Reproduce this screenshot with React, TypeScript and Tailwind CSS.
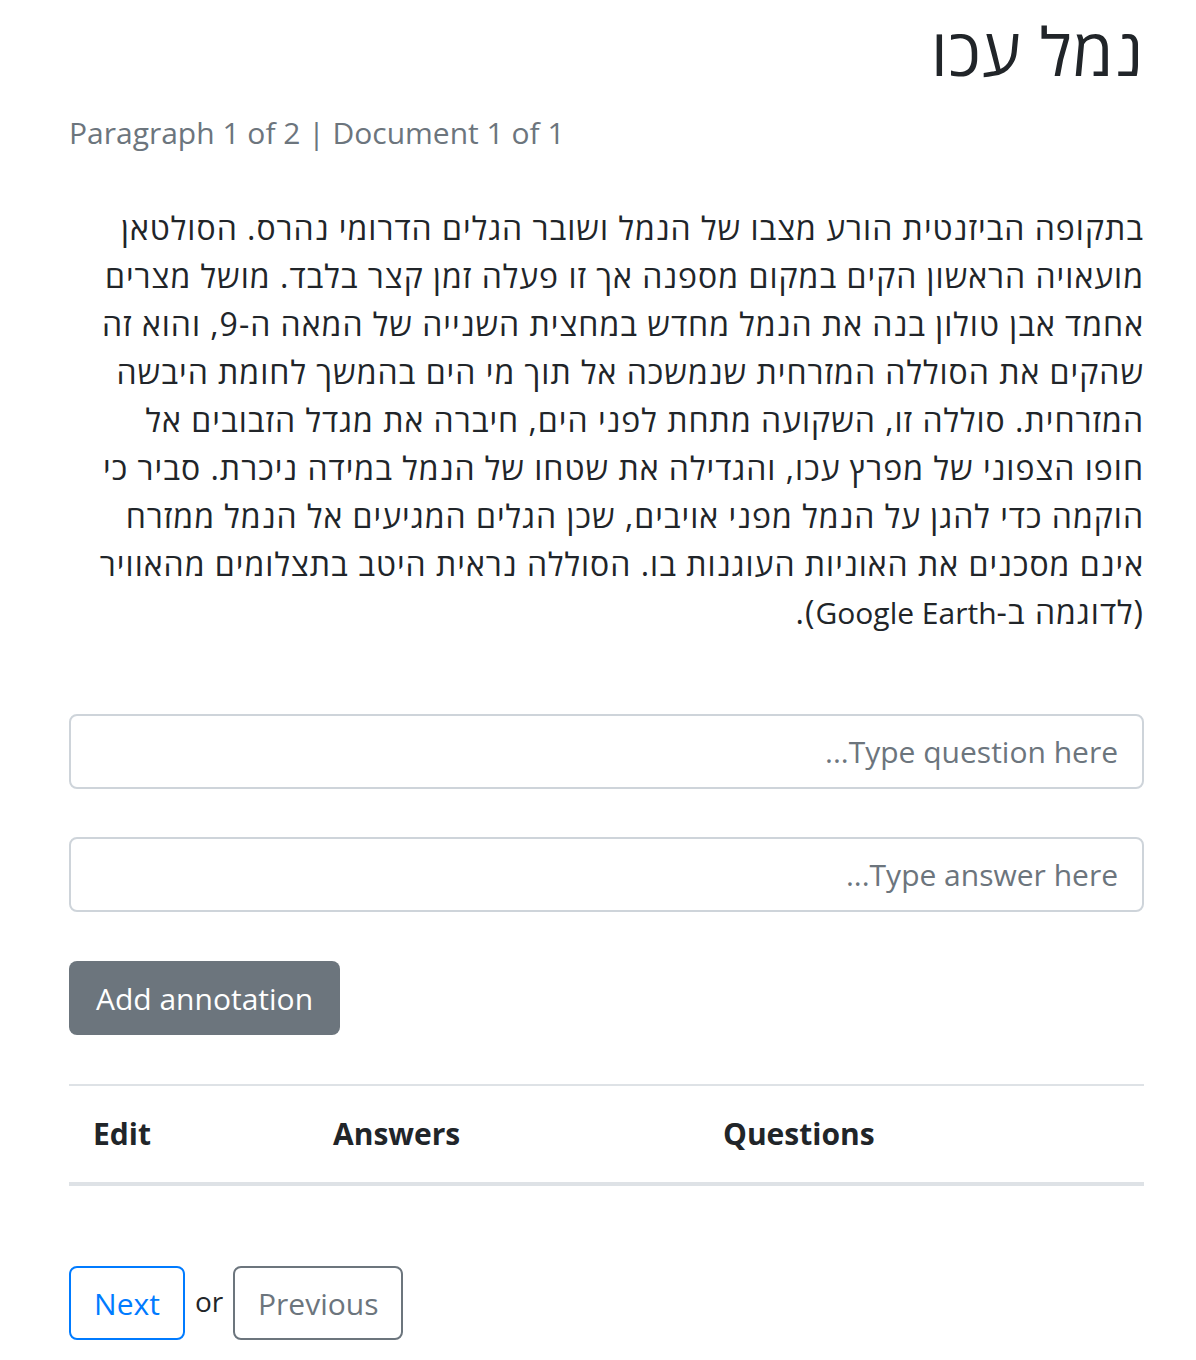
import React, { useState } from 'react';

const paragraphLines = [
  'בתקופה הביזנטית הורע מצבו של הנמל ושובר הגלים הדרומי נהרס. הסולטאן',
  'מועאויה הראשון הקים במקום מספנה אך זו פעלה זמן קצר בלבד. מושל מצרים',
  'אחמד אבן טולון בנה את הנמל מחדש במחצית השנייה של המאה ה-9, והוא זה',
  'שהקים את הסוללה המזרחית שנמשכה אל תוך מי הים בהמשך לחומת היבשה',
  'המזרחית. סוללה זו, השקועה מתחת לפני הים, חיברה את מגדל הזבובים אל',
  'חופו הצפוני של מפרץ עכו, והגדילה את שטחו של הנמל במידה ניכרת. סביר כי',
  'הוקמה כדי להגן על הנמל מפני אויבים, שכן הגלים המגיעים אל הנמל ממזרח',
  'אינם מסכנים את האוניות העוגנות בו. הסוללה נראית היטב בתצלומים מהאוויר',
];

export default function App() {
  const [question, setQuestion] = useState('');
  const [answer, setAnswer] = useState('');

  return (
    <div className="min-h-[1360px] bg-white font-['Open_Sans','Liberation_Sans','DejaVu_Sans',sans-serif] text-[#212529]">
      <div className="ml-[69px] w-[1075px] pt-[14px]">
        <h1 dir="rtl" className="text-[66px] leading-[72px] font-normal tracking-[1px] text-[#212529]">
          נמל עכו
        </h1>

        <div className="mt-[23px] text-[30px] leading-[48px] text-[#6c757d]">
          Paragraph 1 of 2 | Document 1 of 1
        </div>

        {/* hebrew glyphs come out narrow, so a bit larger with some tracking */}
        <p dir="rtl" className="mt-[47px] text-[32px] leading-[48px] tracking-[1px] text-[#212529]">
          {paragraphLines.map((line, i) => (
            <span key={i} className="block whitespace-nowrap">
              {line}
            </span>
          ))}
          <span className="block whitespace-nowrap">
            (לדוגמה ב-<span className="text-[30px] tracking-normal">Google Earth</span>).
          </span>
        </p>

        <div className="mt-[77px] flex flex-col gap-[48px]">
          <input
            dir="rtl"
            type="text"
            value={question}
            onChange={(e) => setQuestion(e.target.value)}
            placeholder="Type question here..."
            className="h-[75px] w-full rounded-[8px] border-2 border-[#ced4da] bg-white px-[24px] text-[30px] text-[#495057] outline-none placeholder:text-[#6c757d]"
          />
          <input
            dir="rtl"
            type="text"
            value={answer}
            onChange={(e) => setAnswer(e.target.value)}
            placeholder="Type answer here..."
            className="h-[75px] w-full rounded-[8px] border-2 border-[#ced4da] bg-white px-[24px] text-[30px] text-[#495057] outline-none placeholder:text-[#6c757d]"
          />
        </div>

        <button className="mt-[49px] h-[74px] w-[271px] rounded-[8px] bg-[#6c757d] text-[30px] text-white">
          Add annotation
        </button>

        <table className="mt-[49px] w-full border-collapse">
          <thead>
            <tr className="border-t-2 border-b-4 border-[#dee2e6]">
              <th className="w-[240px] px-[24px] py-[24px] text-left text-[30px] leading-[48px] font-bold">Edit</th>
              <th className="w-[390px] px-[24px] py-[24px] text-left text-[30px] leading-[48px] font-bold">Answers</th>
              <th className="px-[24px] py-[24px] text-left text-[30px] leading-[48px] font-bold">Questions</th>
            </tr>
          </thead>
          <tbody></tbody>
        </table>

        <div className="mt-[80px] flex items-start gap-[10px]">
          <button className="h-[74px] w-[116px] rounded-[8px] border-2 border-[#007bff] text-[30px] text-[#007bff]">
            Next
          </button>
          <span className="mt-[11px] text-[28px] leading-[48px] text-[#212529]">or</span>
          <button className="h-[74px] w-[170px] rounded-[8px] border-2 border-[#6c757d] text-[30px] text-[#6c757d]">
            Previous
          </button>
        </div>
      </div>
    </div>
  );
}
